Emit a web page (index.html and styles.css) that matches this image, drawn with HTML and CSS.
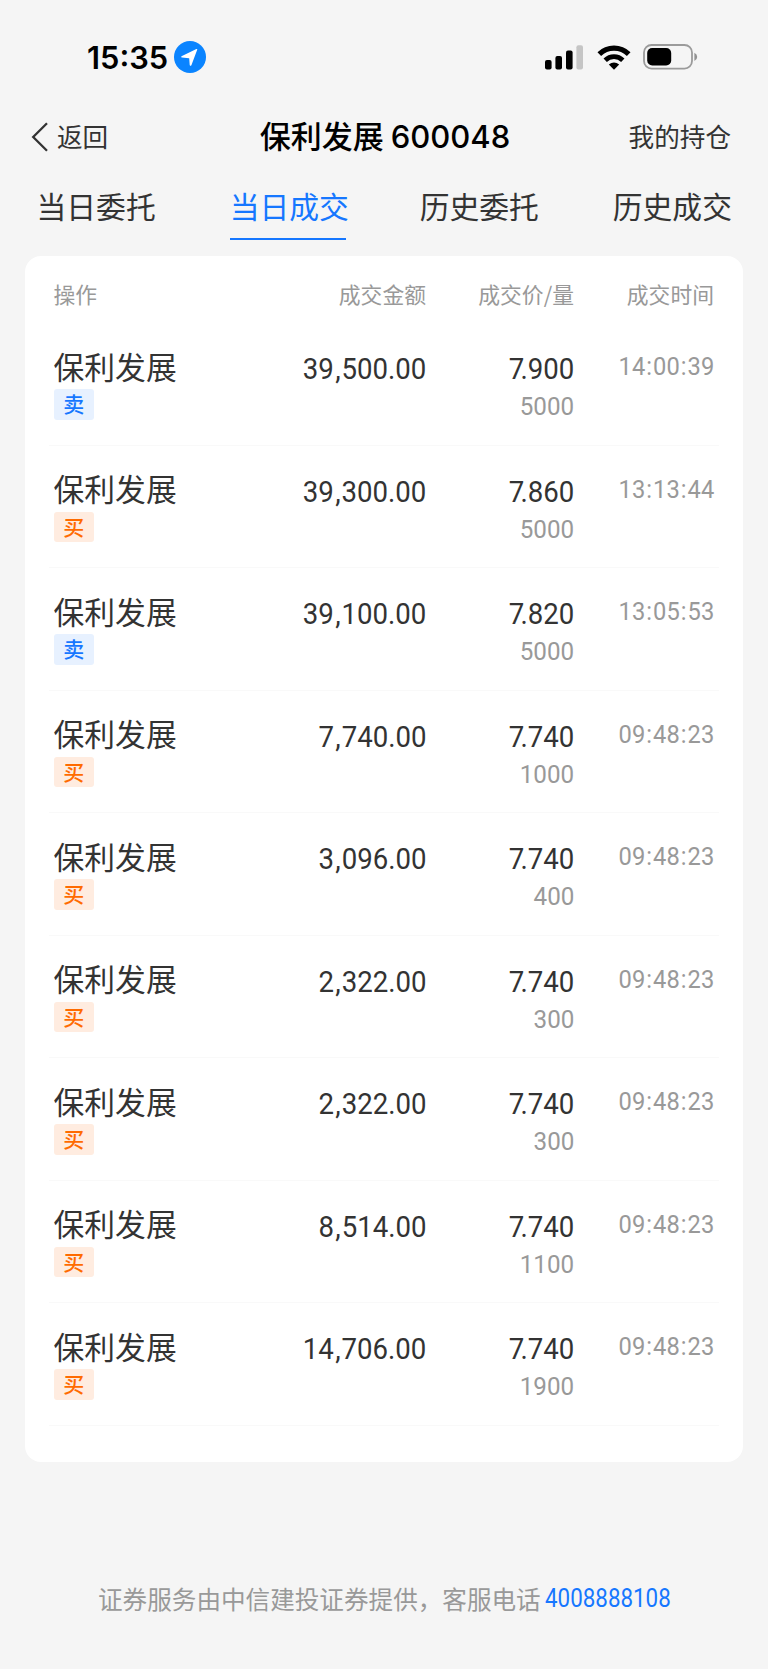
FILE: index.html
```html
<!DOCTYPE html>
<html lang="zh-CN">
<head>
<meta charset="utf-8">
<title>保利发展 600048</title>
<link rel="stylesheet" href="styles.css">
</head>
<body>
<div class="status">
  <span class="clock">15:35</span>
  <svg class="loc" width="32" height="32" viewBox="0 0 32 32"><circle cx="16" cy="16" r="16" fill="#0a84ff"/><path d="M23.2 8.8 17.4 24.2Q16.3 25.6 15.7 24L15.2 17.2 8 16.6Q6.2 16 8 14.9L22.4 8.1Q23.6 7.8 23.2 8.8Z" fill="#fff"/></svg>
  <svg class="signal" width="38" height="25" viewBox="0 0 38 25"><rect x="0" y="15" width="6.6" height="9.5" rx="2"/><rect x="10.4" y="11" width="6.6" height="13.5" rx="2"/><rect x="21" y="5.4" width="6.6" height="19.1" rx="2"/><rect x="31.4" y="0.3" width="6.6" height="24.2" rx="2" fill="#c5c5c5"/></svg>
  <svg class="wifi" width="34" height="25" viewBox="0 0 34 25"><path d="M2.3 9.2A21 21 0 0 1 31.7 9.2" fill="none" stroke="#000" stroke-width="5.2"/><path d="M8.2 15.2A12.6 12.6 0 0 1 25.8 15.2" fill="none" stroke="#000" stroke-width="4.8"/><path d="M17 24.7 11.8 19.6Q17 15.2 22.2 19.6Z"/></svg>
  <svg class="battery" width="55" height="26" viewBox="0 0 55 26"><rect x="1" y="1" width="48" height="23.6" rx="7.6" fill="none" stroke="#9b9b9b" stroke-width="1.8"/><rect x="4.2" y="4" width="24" height="17.4" rx="5"/><path d="M51.4 8.7Q54.2 10.2 54.2 12.9T51.4 17Z" fill="#929292"/></svg>
</div>
<header class="nav">
  <a class="back"><svg width="18" height="30" viewBox="0 0 18 30"><path d="M16 1.2 2.2 15 16 28.8" fill="none" stroke="#333" stroke-width="2.3"/></svg><span>返回</span></a>
  <h1 class="title">保利发展 <span class="code">600048</span></h1>
  <a class="mine">我的持仓</a>
</header>
<nav class="tabs">
  <a class="tab">当日委托</a><a class="tab active">当日成交</a><a class="tab">历史委托</a><a class="tab">历史成交</a>
</nav>
<main class="card">
  <div class="grid head"><span>操作</span><span>成交金额</span><span>成交价/量</span><span>成交时间</span></div>
  <div class="grid row"><div class="stock"><b>保利发展</b><i class="tag sell">卖</i></div><div class="amount"><span>39<u>,</u>500.00</span></div><div class="deal"><span class="price"><em>7</em>.900</span><span class="qty">5000</span></div><div class="time"><span>14<u>:</u>00<u>:</u>39</span></div></div>
  <div class="grid row"><div class="stock"><b>保利发展</b><i class="tag buy">买</i></div><div class="amount"><span>39<u>,</u>300.00</span></div><div class="deal"><span class="price"><em>7</em>.860</span><span class="qty">5000</span></div><div class="time"><span>13<u>:</u>13<u>:</u>44</span></div></div>
  <div class="grid row"><div class="stock"><b>保利发展</b><i class="tag sell">卖</i></div><div class="amount"><span>39<u>,</u>100.00</span></div><div class="deal"><span class="price"><em>7</em>.820</span><span class="qty">5000</span></div><div class="time"><span>13<u>:</u>05<u>:</u>53</span></div></div>
  <div class="grid row"><div class="stock"><b>保利发展</b><i class="tag buy">买</i></div><div class="amount"><span>7<u>,</u>740.00</span></div><div class="deal"><span class="price"><em>7</em>.740</span><span class="qty">1000</span></div><div class="time"><span>09<u>:</u>48<u>:</u>23</span></div></div>
  <div class="grid row"><div class="stock"><b>保利发展</b><i class="tag buy">买</i></div><div class="amount"><span>3<u>,</u>096.00</span></div><div class="deal"><span class="price"><em>7</em>.740</span><span class="qty">400</span></div><div class="time"><span>09<u>:</u>48<u>:</u>23</span></div></div>
  <div class="grid row"><div class="stock"><b>保利发展</b><i class="tag buy">买</i></div><div class="amount"><span>2<u>,</u>322.00</span></div><div class="deal"><span class="price"><em>7</em>.740</span><span class="qty">300</span></div><div class="time"><span>09<u>:</u>48<u>:</u>23</span></div></div>
  <div class="grid row"><div class="stock"><b>保利发展</b><i class="tag buy">买</i></div><div class="amount"><span>2<u>,</u>322.00</span></div><div class="deal"><span class="price"><em>7</em>.740</span><span class="qty">300</span></div><div class="time"><span>09<u>:</u>48<u>:</u>23</span></div></div>
  <div class="grid row"><div class="stock"><b>保利发展</b><i class="tag buy">买</i></div><div class="amount"><span>8<u>,</u>514.00</span></div><div class="deal"><span class="price"><em>7</em>.740</span><span class="qty">1100</span></div><div class="time"><span>09<u>:</u>48<u>:</u>23</span></div></div>
  <div class="grid row"><div class="stock"><b>保利发展</b><i class="tag buy">买</i></div><div class="amount"><span>14<u>,</u>706.00</span></div><div class="deal"><span class="price"><em>7</em>.740</span><span class="qty">1900</span></div><div class="time"><span>09<u>:</u>48<u>:</u>23</span></div></div>
</main>
<footer class="foot"><span>证券服务由中信建投证券提供，客服电话</span><a class="phone">4008888108</a></footer>
</body>
</html>
```
FILE: styles.css
```css
* { box-sizing: border-box; }
body {
  margin: 0;
  height: 1669px;
  background: #f5f5f5;
  color: #333;
  font-family: "Noto Sans CJK SC", sans-serif;
}
b, i, em, u { font-weight: inherit; font-style: normal; text-decoration: none; }
.status {
  display: flex;
  align-items: center;
  height: 114px;
  padding: 0 70px 0 86px;
}
.clock { width: 87px; padding: 1px 0 0 1px; font: 600 30.8px/40px Inter, sans-serif; color: #000; }
.loc { margin-left: 0.5px; }
.signal { margin-left: auto; }
.wifi { margin-left: 13.5px; }
.battery { margin-left: 12.5px; }
.nav {
  display: grid;
  grid-template-columns: 1fr auto 1fr;
  align-items: center;
  height: 46px;
  padding: 0 37px 0 31px;
  font-size: 25.6px;
  line-height: 46px;
}
.nav span, .mine { margin-top: -3px; }
.back { display: flex; align-items: center; gap: 8px; }
.title { margin: -3px -8px 0 0; padding-left: 0; font-size: 31px; font-weight: 500; color: #000; white-space: nowrap; }
.code { font: 500 31px/46px Inter, sans-serif; }
.mine { text-align: right; }
.tabs {
  display: flex;
  justify-content: space-between;
  height: 80px;
  margin: 16px 0 0;
  padding: 4px 36px 0 36.5px;
  font-size: 29.8px;
  line-height: 50px;
}
.tab { height: 60px; }
.active { color: #1677ff; border-bottom: 2.5px solid #1677ff; width: 116px; white-space: nowrap; }
.card {
  width: 718px;
  height: 1206px;
  margin-left: 25px;
  background: #fff;
  border-radius: 16px;
}
.grid {
  display: grid;
  grid-template-columns: 171.5px 201px 148px 140px;
  margin: 0 24px;
  padding: 0 5px 0 4.5px;
}
.head {
  height: 67px;
  padding-top: 18px;
  font-size: 21.8px;
  line-height: 40px;
  color: #999;
}
.head span + span { text-align: right; }
.row { height: 122.5px; border-bottom: 1.5px solid #f9f9f9; }
.stock { display: flex; flex-direction: column; align-items: flex-start; padding-top: 20.5px; }
.stock b { font-size: 30.8px; line-height: 44px; white-space: nowrap; }
.tag {
  width: 40.5px;
  height: 30.5px;
  margin-top: 1.5px;
  border-radius: 3px;
  font-size: 21px;
  font-weight: 500;
  line-height: 28.5px;
  text-align: center;
}
.sell { background: #e7f1ff; color: #1677ff; }
.buy { background: #ffece0; color: #ff6b00; }
.amount, .deal, .time { font-family: Roboto, sans-serif; text-align: right; }
.amount { padding-top: 24px; }
.amount span, .price { display: inline-block; font-size: 30px; line-height: 44px; transform: scaleX(.92); transform-origin: right; }
.amount u { padding: 0 1px 0 1.5px; }
.deal { display: flex; flex-direction: column; align-items: flex-end; padding-top: 24px; }
.price em { letter-spacing: -4px; }
.qty { font-size: 26.3px; line-height: 30px; color: #999; transform: scaleX(.92); transform-origin: right; }
.time { padding-top: 24px; color: #999; }
.time span { display: inline-block; font-size: 26.3px; line-height: 38px; transform: scaleX(.9); transform-origin: right; }
.time u { padding: 0 1.2px; }
.foot {
  display: flex;
  margin-top: 116px;
  padding-left: 98px;
  font-size: 24.6px;
  line-height: 40px;
  color: #999;
}
.phone {
  margin: 1px 0 0 4px;
  font-family: Roboto, sans-serif;
  font-size: 25px;
  color: #1677ff;
  transform: scaleX(.895);
  transform-origin: left;
}
```
